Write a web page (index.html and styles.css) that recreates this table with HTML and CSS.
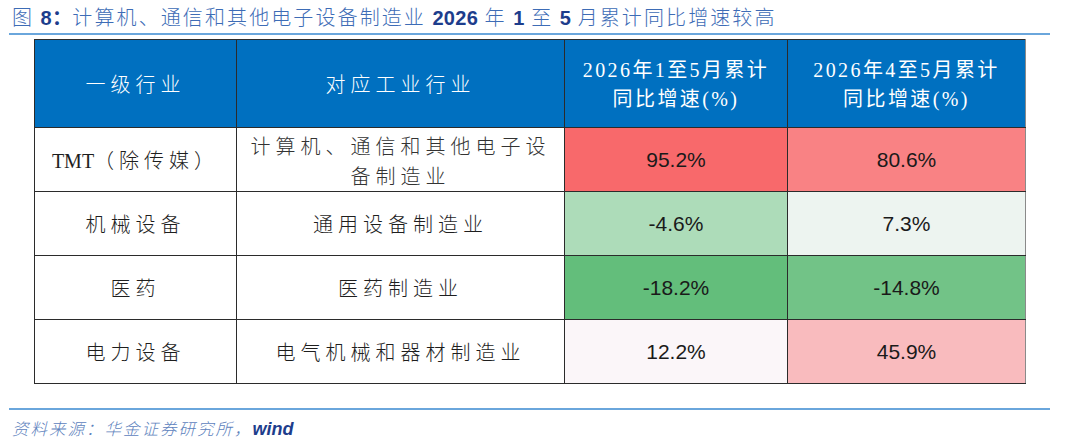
FILE: index.html
```html
<!DOCTYPE html>
<html lang="zh-CN">
<head>
<meta charset="utf-8">
<title>图8</title>
<link rel="stylesheet" href="styles.css">
</head>
<body>
<div class="page">
  <div class="title">
    <span class="cj">图</span> <span class="num">8：</span><span class="cj">计算机、通信和其他电子设备制造业</span> <span class="num">2026</span> <span class="cj">年</span> <span class="num">1</span> <span class="cj">至</span> <span class="num">5</span> <span class="cj">月累计同比增速较高</span>
  </div>

  <table class="grid">
    <colgroup>
      <col class="c1"><col class="c2"><col class="c3"><col class="c4">
    </colgroup>
    <thead>
      <tr class="head">
        <th class="wide">一级行业</th>
        <th class="wide">对应工业行业</th>
        <th class="mix">2026年1至5月累计<br>同比增速(%)</th>
        <th class="mix">2026年4至5月累计<br>同比增速(%)</th>
      </tr>
    </thead>
    <tbody>
      <tr class="row">
        <td class="name"><span class="lat">TMT</span>（除传媒）</td>
        <td class="name two">计算机、通信和其他电子设<br>备制造业</td>
        <td class="val red1">95.2%</td>
        <td class="val red2">80.6%</td>
      </tr>
      <tr class="row">
        <td class="name">机械设备</td>
        <td class="name">通用设备制造业</td>
        <td class="val grn3">-4.6%</td>
        <td class="val pale">7.3%</td>
      </tr>
      <tr class="row">
        <td class="name">医药</td>
        <td class="name">医药制造业</td>
        <td class="val grn1">-18.2%</td>
        <td class="val grn2">-14.8%</td>
      </tr>
      <tr class="row">
        <td class="name">电力设备</td>
        <td class="name">电气机械和器材制造业</td>
        <td class="val pink0">12.2%</td>
        <td class="val pink">45.9%</td>
      </tr>
    </tbody>
  </table>

  <div class="source">
    <span class="src-cj">资料来源：华金证券研究所，</span><span class="src-en">wind</span>
  </div>
</div>
</body>
</html>
```

FILE: styles.css
```css
html, body {
  margin: 0;
  padding: 0;
  background: #ffffff;
}

.page {
  width: 1080px;
  height: 441px;
  overflow: hidden;
  font-family: "Noto Sans CJK SC", sans-serif;
}

/* ---------- title ---------- */
.title {
  margin: 0 30px 0 9px;
  padding-left: 3px;
  height: 33px;
  line-height: 33px;
  font-size: 20px;
  white-space: nowrap;
  border-bottom: 2px solid #6aa6dc;
  word-spacing: 2px;
}

.title .cj {
  color: #3d6cb6;
  letter-spacing: 2.1px;
  font-family: "Noto Sans CJK SC", sans-serif;
  font-weight: 300;
}

.title .num {
  color: #1d3d8c;
  font-weight: 700;
  letter-spacing: 0.3px;
  font-family: "Liberation Sans", "Noto Sans CJK SC", sans-serif;
}

/* ---------- table ---------- */
.grid {
  margin: 4px 0 0 34px;
  width: 991px;
  border-collapse: collapse;
  table-layout: fixed;
}

.c1 { width: 202px; }
.c2 { width: 328px; }
.c3 { width: 223px; }
.c4 { width: 238px; }

.grid th,
.grid td {
  border: 1px solid #2b2b2b;
  padding: 0;
  text-align: center;
  vertical-align: middle;
}

.grid tr > :last-child {
  border-right-color: #8a8a8a;
}

.head {
  height: 88px;
}

.head th {
  background: #0070c0;
  color: #ffffff;
  font-weight: 400;
}

.head .wide {
  font-size: 20px;
  letter-spacing: 5px;
  font-family: "Noto Sans CJK SC", sans-serif;
  font-weight: 300;
}

.head .mix {
  font-size: 20px;
  line-height: 29px;
  letter-spacing: 2.4px;
  font-family: "Liberation Serif", "Noto Sans CJK SC", serif;
  padding-top: 2px;
}

.row {
  height: 64px;
}

.name {
  font-size: 20px;
  color: #1e1e1e;
  letter-spacing: 5px;
  font-family: "Noto Sans CJK SC", sans-serif;
  font-weight: 300;
}

.name.two {
  line-height: 30px;
  padding-top: 2px;
  color: #333333;
}

.lat {
  font-family: "Liberation Serif", serif;
  letter-spacing: 0;
  font-weight: 400;
}

.val {
  font-family: "Liberation Sans", sans-serif;
  font-size: 21px;
  color: #1a1a1a;
}

/* heatmap fills */
.red1  { background: #f8696b; }
.red2  { background: #f98284; }
.grn3  { background: #addcb9; }
.pale  { background: #edf4f0; }
.grn1  { background: #63be7b; }
.grn2  { background: #72c387; }
.pink0 { background: #fbf6f9; }
.pink  { background: #f9bbbe; }

/* ---------- source ---------- */
.source {
  margin: 24px 30px 0 9px;
  padding-left: 3px;
  border-top: 2px solid #6aa6dc;
  height: 32px;
  line-height: 36px;
  white-space: nowrap;
}

.src-cj {
  font-size: 16.5px;
  font-style: italic;
  color: #5d82bd;
  letter-spacing: 2px;
  font-family: "Noto Sans CJK SC", sans-serif;
  font-weight: 300;
}

.src-en {
  font-size: 18px;
  font-style: italic;
  font-weight: 700;
  color: #1d3d8c;
  font-family: "Liberation Sans", sans-serif;
}
```
